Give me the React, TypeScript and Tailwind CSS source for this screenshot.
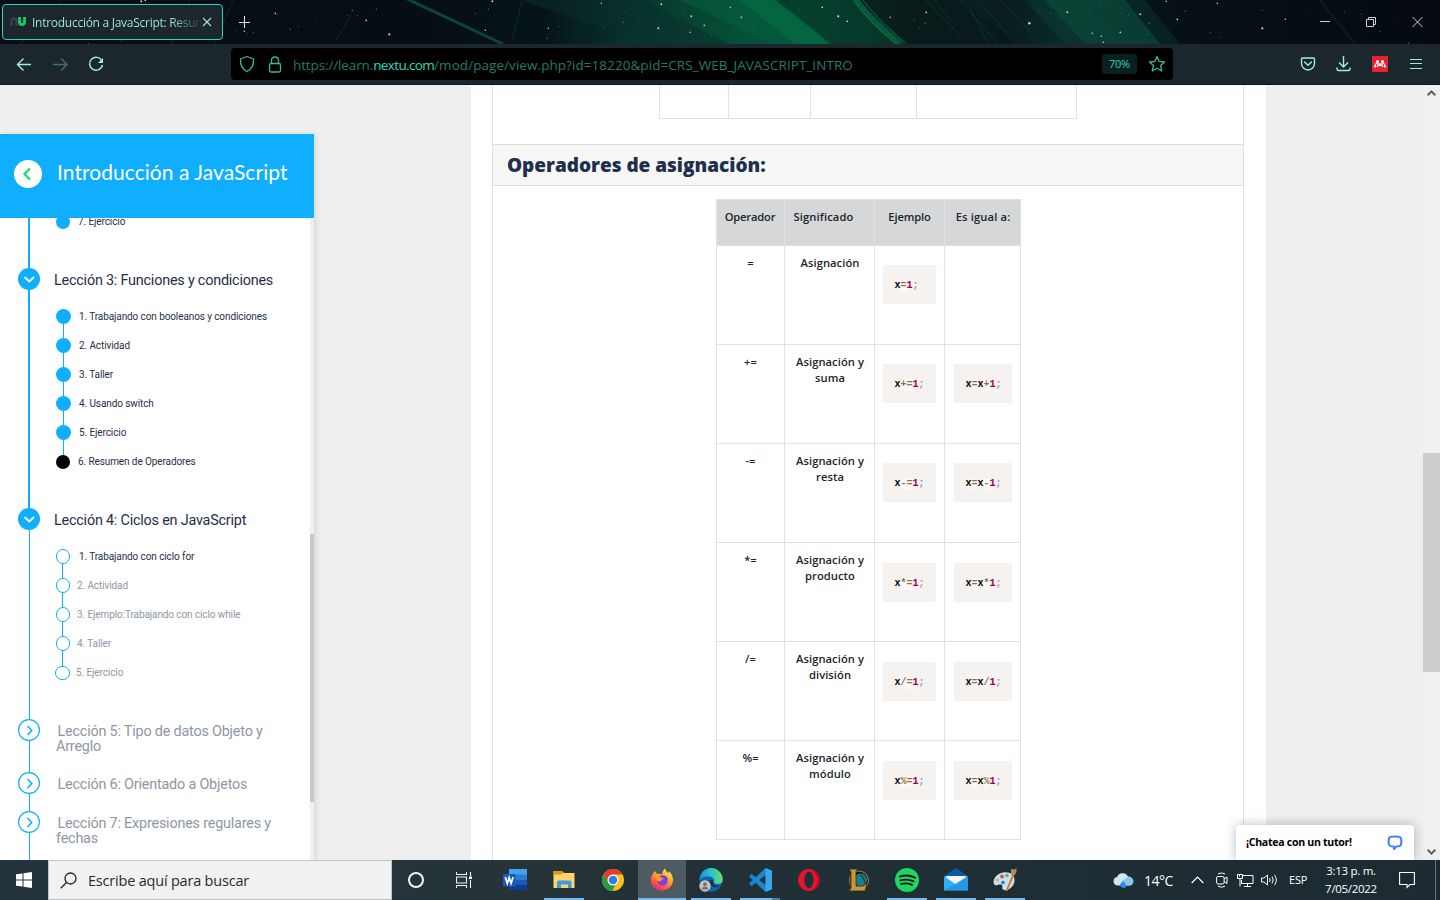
import React from "react";

type Token = { t: string; k: "x" | "op" | "n" | "p" };

const STARS: [number, number, number][] = [
  [141, 1, 1.2], [145, 0, 1], [275, 13, 1], [277, 14, 0.7], [290, 29, 0.8], [298, 26, 0.6], [307, 28, 0.5], [316, 16, 0.5], [347, 15, 0.6], [352, 10, 0.8], [357, 15, 0.6], [366, 20, 1], [376, 9, 0.8], [389, 34, 1.3], [475, 13, 0.7],
  [492, 1, 1.1], [488, 9, 0.8], [485, 30, 0.9], [504, 7, 0.5], [548, 28, 0.9], [547, 38, 0.8], [559, 26, 0.6], [601, 3, 0.9], [594, 5, 0.5], [603, 27, 0.6], [625, 12, 0.6], [623, 22, 0.8], [637, 20, 0.6], [661, 4, 1.1], [658, 28, 1.2], [683, 15, 0.6], [691, 16, 1.1], [690, 32, 0.9], [704, 25, 1], [711, 35, 0.6], [716, 17, 0.6], [730, 7, 0.9], [741, 17, 1], [752, 30, 0.7], [822, 7, 1], [838, 16, 1.3], [847, 21, 1], [890, 17, 0.9], [914, 20, 0.6], [926, 12, 1], [925, 23, 0.8], [919, 27, 0.6],
  [1029, 23, 1.5], [1038, 10, 0.5], [1050, 13, 0.6], [1067, 12, 1.1], [1059, 18, 0.6], [1092, 33, 0.9], [1101, 36, 0.9], [1103, 42, 0.9], [1100, 2, 0.6], [1106, 2, 0.6], [1121, 13, 0.7], [1128, 15, 0.6], [1140, 14, 1.1], [1149, 23, 0.8], [1120, 32, 1], [1147, 34, 0.6], [1166, 1, 0.9], [1177, 19, 1], [1185, 11, 0.8], [1217, 3, 0.9], [1202, 18, 0.5], [1210, 32, 0.7], [1219, 37, 0.6], [1224, 28, 0.5], [1233, 21, 0.5], [1262, 28, 1.3], [1262, 10, 0.7], [1285, 19, 0.9], [1307, 13, 0.5], [1344, 12, 0.6], [1361, 14, 0.7], [1380, 31, 0.7], [1397, 20, 0.5], [1408, 43, 0.8], [236, 30, 0.6], [244, 31, 0.9], [247, 33, 0.6], [253, 32, 0.7], [88, 43, 0.7], [121, 41, 0.7],
];

function Sky() {
  return (
    <svg className="absolute inset-0 h-full w-full" viewBox="0 0 1440 44" preserveAspectRatio="none" aria-hidden="true">
      <defs>
        <linearGradient id="sky" x1="0" x2="1">
          <stop offset="0" stopColor="#070d14" />
          <stop offset=".3" stopColor="#060e14" />
          <stop offset=".38" stopColor="#061519" />
          <stop offset=".44" stopColor="#07352c" />
          <stop offset=".52" stopColor="#055239" />
          <stop offset=".58" stopColor="#064a34" />
          <stop offset=".63" stopColor="#07251f" />
          <stop offset=".7" stopColor="#091c20" />
          <stop offset=".74" stopColor="#092b29" />
          <stop offset=".8" stopColor="#071118" />
          <stop offset="1" stopColor="#050a12" />
        </linearGradient>
      </defs>
      <path d="M0 0H1440V44H0z" fill="url(#sky)" />
      <path d="M520 0H640L730 44H650z" fill="#092e29" opacity=".5" />
      <path d="M680 0H770L830 44H770z" fill="#04603f" opacity=".5" />
      <path d="M740 0H780L829 44H795z" fill="#046c43" opacity=".7" />
      <path d="M775 0H850L905 44H832z" fill="#07372b" opacity=".7" />
      <path d="M855 0H960L1020 44H910z" fill="#08181a" opacity=".7" />
      <path d="M856 0Q872 22 900 44" fill="none" stroke="#07593a" strokeWidth="6" />
      <path d="M854 0Q869 22 896 44M863 0Q875 17 905 43" fill="none" stroke="#0a7048" strokeWidth="1" />
      <path d="M1025 0H1145L1180 44H1065z" fill="#0b4c3c" opacity=".3" />
      <path d="M1045 0H1125L1160 44H1085z" fill="#0b4c3c" opacity=".6" />
      <path d="M1080 0L1115 44M960 0L998 44M970 8L988 44M978 0L1016 44M1000 0L1042 44M790 0L828 44M800 0L832 44M780 14L808 44M925 0L960 35M935 0L950 20" stroke="#0b6a48" strokeWidth=".7" opacity=".45" />
      <path d="M405 -2L503 44" stroke="#0b4535" strokeWidth="3" />
      <path d="M233 0L215 44M352 14L336 40M62 0L20 44M190 0L170 44M522 2L512 40M180 30L172 44" stroke="#0c5a44" strokeWidth=".8" opacity=".5" />
      <path d="M1320 0L1355 44" stroke="#0a2a2c" strokeWidth="2" opacity=".6" />
      {STARS.map(([x, y, r], i) => (
        <circle key={i} cx={x + 0.3} cy={y + 0.3} r={r * 0.85} fill={r > 0.85 ? "#b9d8d2" : "#4d7473"} />
      ))}
    </svg>
  );
}

function BrowserChrome() {
  return (
    <header className="flex h-[85px] shrink-0 flex-col bg-[#07191a] font-['Open_Sans','Noto_Sans',sans-serif]">
      <div className="relative h-11 overflow-hidden">
        <Sky />
        <div className="relative flex h-full items-start">
          <div className="mt-1 ml-[2px] flex h-9 w-[221px] items-center rounded-[4px] border border-[#2fd3b9] bg-[#1c262d] pl-[7px]">
            <svg width="16" height="10" viewBox="0 0 16 10" className="shrink-0" aria-hidden="true">
              <path d="M1.5 9V4Q1.5 1.5 4 1.5T6.5 4V9" fill="none" stroke="#35404f" strokeWidth="2.4" />
              <path d="M9.5 0V5Q9.5 7.6 12 7.6T14.5 5V0" fill="none" stroke="#15cf62" strokeWidth="2.8" />
            </svg>
            <span className="ml-[6px] w-[169px] overflow-hidden whitespace-nowrap bg-gradient-to-r from-[#a6f0e3] from-82% to-[#1c262d] to-102% bg-clip-text pt-px text-[12px] leading-5 tracking-[-0.27px] text-transparent">
              Introducción a JavaScript: Resumen
            </span>
            <svg width="10" height="10" viewBox="0 0 10 10" className="ml-[1px]" aria-hidden="true">
              <path d="M1 1L9 9M9 1L1 9" stroke="#a6e8dd" strokeWidth="1.1" />
            </svg>
          </div>
          <svg width="12" height="12" viewBox="0 0 12 12" className="mt-[16px] ml-4" aria-hidden="true">
            <path d="M5.500 0V12M0 6.500H11" stroke="#c5eee6" strokeWidth="1.1" />
          </svg>
          <div className="mt-[16px] mr-[17px] ml-auto flex items-center gap-[35px]">
            <svg width="11" height="12" viewBox="0 0 11 12" aria-hidden="true"><path d="M0 5.500H10" stroke="#c3d4d2" /></svg>
            <svg width="11" height="12" viewBox="0 0 11 12" fill="none" stroke="#c3d4d2" aria-hidden="true"><path d="M.5 3.500h7v7h-7zM2.500 3V1.500h7v7H8" /></svg>
            <svg width="11" height="12" viewBox="0 0 11 12" stroke="#c3d4d2" aria-hidden="true"><path d="M.5 1L10.500 11M10.500 1L.5 11" /></svg>
          </div>
        </div>
      </div>
      <div className="flex h-10 items-center bg-[#1c262d]">
        <svg width="104" height="20" viewBox="0 0 104 20" fill="none" className="ml-4 shrink-0" aria-hidden="true">
          <path d="M15 10.500H1.500M7.500 4.500L1.500 10.500L7.500 16.500" stroke="#9af0e0" strokeWidth="1.400" />
          <path d="M37 10.500H50.500M45 4.500L51 10.500L45 16.500" stroke="#3d716f" strokeWidth="1.400" />
          <path d="M86 7A6.500 6.500 0 1 0 86.500 11" stroke="#9af0e0" strokeWidth="1.500" />
          <path d="M87 4V9H82z" fill="#9af0e0" />
        </svg>
        <div className="ml-[111px] flex h-8 w-[942px] shrink-0 items-center rounded-[4px] bg-black pr-[7px] pl-2">
          <svg width="16" height="18" viewBox="0 0 16 18" fill="none" stroke="#36b9a2" strokeWidth="1.300" aria-hidden="true">
            <path d="M8 1.500L14.500 4C14.800 10 12.500 14.500 8 16.500C3.500 14.500 1.200 10 1.500 4z" strokeLinejoin="round" />
          </svg>
          <svg width="14" height="17" viewBox="0 0 14 17" fill="none" stroke="#36b9a2" strokeWidth="1.300" className="ml-[13px]" aria-hidden="true">
            <rect x="1.500" y="7.500" width="11" height="8.500" rx="1.500" />
            <path d="M3.500 7.500V4.500Q3.500 1 7 1T10.500 4.500V7.500" />
          </svg>
          <span className="ml-[11px] pt-px whitespace-nowrap text-[13.500px] leading-5 text-[#26796c]">
            <span className="tracking-[-0.120px]">https://learn.</span><span className="tracking-[-0.640px] text-[#30d9bd]">nextu.com</span><span className="tracking-[0.060px]">/mod/page/view.php?id=18220&amp;pid=CRS_WEB_JAVASCRIPT_INTRO</span>
          </span>
          <span className="ml-auto flex h-5 w-[35px] items-center justify-center rounded-[3px] bg-[#09201f] pt-px text-[11px] tracking-[-0.300px] text-[#31d0b5]">70%</span>
          <svg width="18" height="18" viewBox="0 0 18 18" fill="none" stroke="#36b9a2" strokeWidth="1.300" strokeLinejoin="round" className="ml-[11px]" aria-hidden="true">
            <path d="M9 1.500L11.200 6.400L16.500 7L12.600 10.600L13.700 16L9 13.300L4.300 16L5.400 10.600L1.500 7L6.800 6.400z" />
          </svg>
        </div>
        <div className="mr-[17px] ml-auto flex items-center">
          <svg width="16" height="16" viewBox="0 0 16 16" fill="none" stroke="#9af0e0" strokeWidth="1.400" aria-hidden="true">
            <path d="M2.500 2H13.500Q14.500 2 14.500 3V7.500A6.500 6.500 0 0 1 1.500 7.500V3Q1.500 2 2.500 2z" />
            <path d="M4.500 6L8 9.300L11.500 6" strokeLinecap="round" />
          </svg>
          <svg width="16" height="18" viewBox="0 0 16 18" fill="none" stroke="#9af0e0" strokeWidth="1.400" className="ml-5" aria-hidden="true">
            <path d="M7.500 1V12M3 7.500L7.500 12L12 7.500M1 12.500V14Q1 15.500 2.500 15.500H12.500Q14 15.500 14 14V12.500" />
          </svg>
          <svg width="16" height="16" viewBox="0 0 16 16" className="ml-5" aria-hidden="true">
            <path d="M0 0H16V16H0z" fill="#e8202f" />
            <circle cx="5.500" cy="5.500" r="1.500" fill="#fff" />
            <circle cx="10.500" cy="5.500" r="1.500" fill="#fff" />
            <circle cx="8" cy="8.600" r="1.600" fill="#fff" />
            <path d="M3.200 10.500Q3 8 5 6.800M12.800 10.500Q13 8 11 6.800M5.500 5.500L6 9.500L5.800 11M10.500 5.500L10 9.500L10.200 11" fill="none" stroke="#fff" strokeWidth="1.100" />
            <circle cx="3.200" cy="10.300" r="1.200" fill="#fff" />
            <circle cx="12.800" cy="10.300" r="1.200" fill="#fff" />
          </svg>
          <svg width="13" height="12" viewBox="0 0 13 12" stroke="#9af0e0" strokeWidth="1.100" className="ml-[22px]" aria-hidden="true">
            <path d="M0 1.500H12M0 5.500H12M0 10.500H12" />
          </svg>
        </div>
      </div>
    </header>
  );
}

function LessonCircle({ open }: { open?: boolean }) {
  return open ? (
    <svg width="22" height="22" viewBox="0 0 22 22" className="ml-[18px] shrink-0" aria-hidden="true">
      <circle cx="11" cy="11" r="11" fill="#0faeff" />
      <path d="M6.500 9L11.300 13.500L16 9" fill="none" stroke="#fff" strokeWidth="1.800" />
    </svg>
  ) : (
    <svg width="22" height="22" viewBox="0 0 22 22" className="ml-[18px] shrink-0" aria-hidden="true">
      <circle cx="11" cy="11" r="10.400" fill="#fff" stroke="#0faeff" strokeWidth="1.200" />
      <path d="M9.500 7L13.700 11.500L9.500 16" fill="none" stroke="#0faeff" strokeWidth="1.600" />
    </svg>
  );
}

function Lesson({ open, title }: { open?: boolean; title: string[] }) {
  return (
    <div className="flex h-[22px] items-start">
      <LessonCircle open={open} />
      {open ? (
        <span className="mt-px ml-[14px] whitespace-nowrap text-[14.400px] leading-6 tracking-[-0.210px] text-[#1f2f46]">{title[0]}</span>
      ) : (
        <div className="mt-[6px] ml-[16px] flex flex-col text-[14.400px] leading-[14.500px] tracking-[-0.200px] text-[#8d97a3]">
          <span className="ml-[1.500px] whitespace-nowrap">{title[0]}</span>
          {title[1] && <span>{title[1]}</span>}
        </div>
      )}
    </div>
  );
}

function Item({ label, kind, muted, indent }: { label: string; kind: "done" | "now" | "todo"; muted?: boolean; indent: "a" | "b" | "c" | "d" }) {
  const dot =
    kind === "done"
      ? indent === "b"
        ? "h-[14px] w-[14px] bg-[#0faeff]"
        : "h-[15px] w-[15px] bg-[#0faeff]"
      : kind === "now"
        ? "h-[14px] w-[14px] bg-black"
        : indent === "d"
          ? "h-[14px] w-[15px] border border-[#0faeff] bg-white"
          : "h-[15px] w-[14px] border border-[#0faeff] bg-white";
  const gap = { a: "pl-[79px]", b: "pl-[78px]", c: "pl-[77px]", d: "pl-[76px]" }[indent];
  return (
    <li className="grid h-[29px] items-center">
      <i className={`col-start-1 row-start-1 ${indent === "d" ? "ml-[55px]" : "ml-[56px]"} rounded-full ${dot}`} />
      <span className={`col-start-1 row-start-1 whitespace-nowrap text-[10px] leading-4 tracking-[-0.100px] ${gap} ${muted ? "text-[#8d97a3]" : "text-[#1f2f46]"}`}>{label}</span>
    </li>
  );
}

function Sidebar() {
  return (
    <aside className="mt-[49px] flex h-[726px] w-[314px] shrink-0 flex-col bg-white font-[Roboto,sans-serif] shadow-[2px_0_5px_rgba(0,0,0,0.10)]">
      <div className="flex h-[84px] shrink-0 items-center bg-[#0faeff] pb-1">
        <svg width="28" height="28" viewBox="0 0 28 28" className="ml-[14px]" aria-hidden="true">
          <circle cx="14" cy="14" r="14" fill="#fff" />
          <path d="M16 8.500L10.500 14L16 19.500" fill="none" stroke="#1bd773" strokeWidth="2.200" />
        </svg>
        <h1 className="ml-[15px] pb-[4px] font-[Lato,sans-serif] text-[21px] leading-8 tracking-[0.050px] whitespace-nowrap text-white">Introducción a JavaScript</h1>
      </div>
      <div className="flex h-[642px] overflow-hidden">
        <div className="grid h-[642px] w-[310px] overflow-hidden">
          <div className="col-start-1 row-start-1 ml-[28px] flex h-[642px] flex-col">
            <i className="h-[301px] w-[2px] bg-[#0faeff]" />
            <i className="ml-px h-[341px] w-px bg-[#0faeff]" />
          </div>
          <div className="col-start-1 row-start-1 flex h-[642px] flex-col">
            <ul className="-mt-[11px] h-[29px] shrink-0">
              <Item label="7. Ejercicio" kind="done" indent="b" />
            </ul>
            <div className="mt-[32px]"><Lesson open title={["Lección 3: Funciones y condiciones"]} /></div>
            <div className="mt-[12px] grid">
              <i className="col-start-1 row-start-1 mt-[14px] ml-[63px] h-[145px] w-px bg-[#0faeff]" />
              <ul className="col-start-1 row-start-1">
                <Item label="1. Trabajando con booleanos y condiciones" kind="done" indent="a" />
                <Item label="2. Actividad" kind="done" indent="a" />
                <Item label="3. Taller" kind="done" indent="a" />
                <Item label="4. Usando switch" kind="done" indent="a" />
                <Item label="5. Ejercicio" kind="done" indent="a" />
                <Item label="6. Resumen de Operadores" kind="now" indent="b" />
              </ul>
            </div>
            <div className="mt-[32px]"><Lesson open title={["Lección 4: Ciclos en JavaScript"]} /></div>
            <div className="mt-[12px] grid">
              <i className="col-start-1 row-start-1 mt-[14px] ml-[62px] h-[116px] w-px bg-[#0faeff]" />
              <ul className="col-start-1 row-start-1">
                <Item label="1. Trabajando con ciclo for" kind="todo" indent="a" />
                <Item label="2. Actividad" kind="todo" muted indent="c" />
                <Item label="3. Ejemplo:Trabajando con ciclo while" kind="todo" muted indent="c" />
                <Item label="4. Taller" kind="todo" muted indent="c" />
                <Item label="5. Ejercicio" kind="todo" muted indent="d" />
              </ul>
            </div>
            <div className="mt-[32px]"><Lesson title={["Lección 5: Tipo de datos Objeto y", "Arreglo"]} /></div>
            <div className="mt-[31px]"><Lesson title={["Lección 6: Orientado a Objetos"]} /></div>
            <div className="mt-[17px]"><Lesson title={["Lección 7: Expresiones regulares y", "fechas"]} /></div>
          </div>
        </div>
        <div className="w-1 bg-[#efefef] pt-[316px]"><div className="h-[268px] bg-[#c9c9c9]" /></div>
      </div>
    </aside>
  );
}

function tokens(code: string): Token[] {
  return (code.match(/x|1|;|[^x1;]+/g) ?? []).map((t) => ({ t, k: t === "x" ? "x" : t === "1" ? "n" : t === ";" ? "p" : "op" }));
}

const TOKEN_STYLE = {
  x: "font-bold text-black",
  n: "font-bold text-[#990055]",
  p: "text-[#999999]",
  op: "bg-white/50 text-[#9a6e3a]",
};

function Code({ code }: { code: string }) {
  return (
    <pre className="flex h-[39px] items-center bg-[#f5f2f0] pt-[2px] pl-3 font-['Liberation_Mono',monospace] text-[10px] leading-3">
      {tokens(code).map((p, i) => (
        <span key={i} className={TOKEN_STYLE[p.k]}>{p.t}</span>
      ))}
    </pre>
  );
}

const ROWS: [string, string, string, string][] = [
  ["=", "Asignación", "x=1;", ""],
  ["+=", "Asignación y suma", "x+=1;", "x=x+1;"],
  ["-=", "Asignación y resta", "x-=1;", "x=x-1;"],
  ["*=", "Asignación y producto", "x*=1;", "x=x*1;"],
  ["/=", "Asignación y división", "x/=1;", "x=x/1;"],
  ["%=", "Asignación y módulo", "x%=1;", "x=x%1;"],
];

function Content() {
  return (
    <main className="ml-[157px] w-[795px] shrink-0 bg-white pl-[21px]">
      <div className="flex h-[775px] w-[752px] flex-col items-center border-x border-[#dfe1e4]">
        <div className="grid h-[34px] w-[418px] shrink-0 grid-cols-[69px_82px_106px_160px] border-b border-l border-[#dee2e6]">
          <i className="border-r border-[#dee2e6]" />
          <i className="border-r border-[#dee2e6]" />
          <i className="border-r border-[#dee2e6]" />
          <i className="border-r border-[#dee2e6]" />
        </div>
        <h2 className="mt-[25px] flex h-[42px] w-full shrink-0 items-center border-y border-[#dadcde] bg-[#f7f7f7] pl-[14px] font-['Open_Sans',sans-serif] text-[19px] font-extrabold tracking-[-0.020px] whitespace-nowrap text-[#20304c]">
          Operadores de asignación:
        </h2>
        <div className="mt-[13px] w-[305px] shrink-0 border-t border-l border-[#dee2e6] font-['Open_Sans',sans-serif] text-[11.200px] leading-4 font-semibold text-[#212529]">
          <div className="grid h-[46px] grid-cols-[68px_90px_70px_76px] bg-[#d5d7d9] text-center whitespace-nowrap">
            <div className="border-r border-b border-[#dee2e6] pt-[9px] tracking-[-0.180px]">Operador</div>
            <div className="border-r border-b border-[#dee2e6] pt-[9px] pr-[11px] tracking-[0.120px]">Significado</div>
            <div className="border-r border-b border-[#dee2e6] pt-[9px] pl-px tracking-[-0.150px]">Ejemplo</div>
            <div className="border-r border-b border-[#dee2e6] pt-[9px] pl-[2px] tracking-[0.150px]">Es igual a:</div>
          </div>
          {ROWS.map(([op, name, a, b], i) => (
            <div key={op} className="grid h-[99px] grid-cols-[68px_90px_70px_76px] text-center">
              <div className="border-r border-b border-[#dee2e6] pt-[9px] pl-px">{op}</div>
              <div className="border-r border-b border-[#dee2e6] pt-[9px] pr-[7px] pl-[9px] leading-[16.300px] tracking-[0.050px]">{name}</div>
              <div className={`border-r border-b border-[#dee2e6] px-[8px] ${i > 2 ? "pt-[20px]" : "pt-[19px]"}`}><Code code={a} /></div>
              <div className={`border-r border-b border-[#dee2e6] pr-[8px] pl-[9px] ${i > 2 ? "pt-[20px]" : "pt-[19px]"}`}>{b && <Code code={b} />}</div>
            </div>
          ))}
        </div>
      </div>
    </main>
  );
}

function Arrow({ down }: { down?: boolean }) {
  return (
    <svg width="9" height="6" viewBox="0 0 9 6" aria-hidden="true">
      <path d={down ? "M.7 .8L4.500 4.600L8.300 .8" : "M.7 5.200L4.500 1.400L8.300 5.200"} fill="none" stroke="#5d5d5d" strokeWidth="2" />
    </svg>
  );
}

const svg = (size: number, body: React.ReactNode) => (
  <svg width={size} height={size} viewBox="0 0 24 24" aria-hidden="true">{body}</svg>
);

const APPS: { name: string; line: "none" | "short" | "full" | "split"; icon: React.ReactNode }[] = [
  { name: "word", line: "none", icon: svg(24, <><path d="M6 1H24V7H6z" fill="#41a5ee" /><path d="M6 6.500H24V12H6z" fill="#2b7cd3" /><path d="M6 12H24V17.500H6z" fill="#185abd" /><path d="M6 17H24V22H6z" fill="#103f91" /><rect y="6" width="12.500" height="12.500" rx="1" fill="#185abd" /><path d="M2.300 9L4.300 15.500L6.200 9.500L8.100 15.500L10.100 9" fill="none" stroke="#fff" strokeWidth="1.700" /></>) },
  { name: "explorer", line: "short", icon: svg(24, <><path d="M1.500 3H10L12 5H22.500V20H1.500z" fill="#ffd567" /><path d="M1.500 3H10L11 5L9.500 6.500H1.500z" fill="#d99a14" /><path d="M5 20V14Q5 12.500 6.500 12.500H18Q19.500 12.500 19.500 14V20H16V16.500H9V20z" fill="#3a9be0" /></>) },
  { name: "chrome", line: "none", icon: svg(24, <><circle cx="12" cy="12" r="11" fill="#fbc116" /><path d="M2.500 6.500A11 11 0 0 1 21.500 6.500H12L7.300 9.300L7.300 14.800z" fill="#e33b2e" /><path d="M2.500 6.500L7.300 14.800Q9.500 18 14.500 16.500L11.500 23A11 11 0 0 1 2.500 6.500z" fill="#229a48" /><circle cx="12" cy="12" r="5.500" fill="#fff" /><circle cx="12" cy="12" r="4.300" fill="#2f7de9" /></>) },
  { name: "firefox", line: "full", icon: svg(24, <><defs><linearGradient id="ff" x1=".8" y1="0" x2=".2" y2="1"><stop offset="0" stopColor="#fff05a" /><stop offset=".45" stopColor="#ff9a2a" /><stop offset=".8" stopColor="#ff3d55" /><stop offset="1" stopColor="#e62a77" /></linearGradient></defs><path d="M3 5.500L5 3L7 6Q10 5.500 12 6.500Q12 3 15 .5Q16 3.500 18 5L19.500 3.500Q23.500 8 23 13.500A11.300 11 0 0 1 .7 13.500Q.7 8 3 5.500z" fill="url(#ff)" /><circle cx="12.500" cy="12.500" r="5.200" fill="#8040e0" /><path d="M4 8.500Q8 6.500 11 9.500L14 10.500Q11 11.500 10.500 13.500Q7 14 4 8.500z" fill="#ff9b2b" /><path d="M12.500 7.300Q17.800 8 17.700 12.500Q16 9 12.500 7.300z" fill="#5a39c8" /></>) },
  { name: "edge", line: "short", icon: svg(24, <><defs><linearGradient id="eg" x1="0" x2="1"><stop offset="0" stopColor="#1790dc" /><stop offset=".5" stopColor="#2bc3d2" /><stop offset="1" stopColor="#65e15a" /></linearGradient></defs><circle cx="12" cy="12" r="11.500" fill="#0f64b5" /><path d="M.5 12A11.500 11.500 0 0 1 23.700 11Q24 16 18.500 16Q14.500 16 15 13.500Q15.500 9.500 11 8.500Q5 7.500 .5 12z" fill="url(#eg)" /><path d="M14 12Q13 17 18 18Q21 18 23 16.500Q19 20 14.500 19Q9.500 17.500 10.500 12.500z" fill="#203039" /><circle cx="6" cy="18" r="5.700" fill="#c7c5c2" /><circle cx="6" cy="16.300" r="2" fill="#77726e" /><path d="M2.700 21.500Q3 18.500 6 18.500T9.300 21.500z" fill="#77726e" /></>) },
  { name: "code", line: "split", icon: svg(24, <><path d="M17.500 0L24 2.800V21.200L17.500 24L1 8.500L3.500 6L17.500 17V7L3.500 18L1 15.500z" fill="#1689d2" /><path d="M17.500 0L24 2.800V21.200L17.500 24z" fill="#35a8ef" /></>) },
  { name: "opera", line: "none", icon: svg(24, <><ellipse cx="12" cy="12" rx="11" ry="11" fill="#e3152c" /><path d="M15 1.500A11 11 0 0 1 15 22.500Q21 18 21 12T15 1.500z" fill="#a70e1e" /><ellipse cx="12" cy="12" rx="4.600" ry="8.300" fill="#232f36" /></>) },
  { name: "league", line: "none", icon: svg(24, <><circle cx="13" cy="12.500" r="9.500" fill="#0b1d24" stroke="#a67c35" strokeWidth="1.100" /><circle cx="14.500" cy="12" r="6.500" fill="#1c7f8c" /><path d="M14 7Q18 9 19 15" fill="none" stroke="#0d4c59" strokeWidth="1.500" /><path d="M3 1H11.500L10 3.500V18H17L21 15.500L19 23H3L5 20V4z" fill="#c8973d" stroke="#38270f" strokeWidth=".8" /></>) },
  { name: "spotify", line: "short", icon: svg(24, <><circle cx="12" cy="12" r="12" fill="#1ed760" /><path d="M5 8.500Q12.500 6 20 9.700M5.500 12.400Q12.500 10.500 18.500 13.300M6 16Q12 14.500 17 16.800" fill="none" stroke="#121a18" strokeWidth="1.900" strokeLinecap="round" /></>) },
  { name: "mail", line: "short", icon: svg(24, <><path d="M0 8L12 0L24 8V12H0z" fill="#0c59a8" /><path d="M2 8H22V17H2z" fill="#f4f7fb" /><path d="M0 8L12 16.500L24 8V22.500H0z" fill="#32b1f4" /><path d="M24 8L0 22.500H24z" fill="#178be0" opacity=".6" /></>) },
  { name: "paint", line: "short", icon: svg(24, <><path d="M10 4.500C17 3 22 7 21.500 13C21 19 15 23 11 22C7.500 21 11 17.500 8 16.500C5 16 2 19 .7 15.500C-.3 11 4 5.500 10 4.500z" fill="#c6e1f0" /><circle cx="9" cy="8.500" r="1.900" fill="#e94b3b" /><circle cx="14" cy="7.500" r="1.700" fill="#61b653" /><circle cx="4.500" cy="12" r="1.800" fill="#e5b93f" /><circle cx="10" cy="14.500" r="1.800" fill="#3b70bd" /><path d="M12.500 23L19 7L21 8L14.500 23z" fill="#d77d2b" /><path d="M18 1Q21 2 23.500 .5Q24 5 20.500 8L18 7z" fill="#b88962" /></>) },
];

function Taskbar() {
  return (
    <footer className="flex h-10 shrink-0 bg-[linear-gradient(90deg,#23333b,#26343a_35%,#202e35_60%,#1d2a31)] font-['Open_Sans','Noto_Sans',sans-serif] text-white">
      <div className="flex w-12 items-center justify-center">
        <svg width="16" height="16" viewBox="0 0 16 16" fill="#fff" aria-hidden="true"><path d="M0 2.300L6.500 1.400V7.500H0zM7.500 1.200L16 0V7.500H7.500zM0 8.500H6.500V14.600L0 13.700zM7.500 8.500H16V16L7.500 14.800z" /></svg>
      </div>
      <div className="flex w-[344px] items-center border border-[#c2c5c6] bg-[#f1f1f1] pl-[11px]">
        <svg width="17" height="17" viewBox="0 0 17 17" fill="none" stroke="#222" strokeWidth="1.300" aria-hidden="true"><circle cx="10.500" cy="6.500" r="5.500" /><path d="M6.500 10.500L.7 16.300" /></svg>
        <span className="ml-[11px] pt-px text-[14.500px] tracking-[-0.200px] whitespace-nowrap text-[#2c2c2c]">Escribe aquí para buscar</span>
      </div>
      <div className="flex w-12 items-center justify-center">
        <svg width="18" height="18" viewBox="0 0 18 18" aria-hidden="true"><circle cx="9" cy="9" r="7" fill="none" stroke="#f2f2f2" strokeWidth="2" /></svg>
      </div>
      <div className="flex w-12 items-center justify-center">
        <svg width="16" height="16" viewBox="0 0 16 16" fill="none" stroke="#f0f0f0" strokeWidth="1.100" aria-hidden="true"><path d="M.5 0V2.500H10.500V0M.5 5H10.500V11H.5zM.5 16V13.500H10.500V16M14.500 0V4M14.500 8V16" /><path d="M13 4.500H16V7H13z" fill="#fff" stroke="none" /></svg>
      </div>
      <nav className="ml-[3px] flex gap-px">
        {APPS.map((a) => (
          <div key={a.name} className={`flex w-12 flex-col items-center ${a.line === "full" ? "bg-[#4d5b63]" : ""}`}>
            <div className="flex h-[38px] items-center pt-[2px]">{a.icon}</div>
            {a.line === "short" && <i className="h-[2px] w-10 bg-[#76b9ed]" />}
            {a.line === "full" && <i className="h-[2px] w-12 bg-[#76b9ed]" />}
            {a.line === "split" && <div className="flex h-[2px] w-10"><i className="h-[2px] w-8 bg-[#76b9ed]" /><i className="h-[2px] w-2 bg-[#547f9f]" /></div>}
          </div>
        ))}
      </nav>
      <div className="ml-auto flex items-center">
        <svg width="21" height="17" viewBox="0 0 21 17" aria-hidden="true">
          <path d="M4.500 13.500A4.300 4.300 0 0 1 4 5A6 6 0 0 1 15 4.500A4.600 4.600 0 0 1 16.500 13.500z" fill="#cfe6f9" />
          <path d="M7 13.500Q8 8 15 5Q20 5 20.500 9.500Q20 13.500 16.500 13.500z" fill="#8dc3ef" />
          <path d="M10.500 9Q14 13 12.800 15T8.300 15T10.500 9z" fill="#2d8ce6" />
        </svg>
        <span className="ml-[10px] w-[32px] pt-px text-[14px] tracking-[-0.500px]">14°C</span>
        <svg width="13" height="8" viewBox="0 0 13 8" className="ml-[15px]" aria-hidden="true"><path d="M.7 7L6.500 1.200L12.300 7" fill="none" stroke="#fff" strokeWidth="1.200" /></svg>
        <svg width="12" height="16" viewBox="0 0 12 16" fill="none" stroke="#fff" className="ml-[12px]" aria-hidden="true"><rect x=".6" y="4.500" width="7.500" height="7.500" rx="1.500" /><path d="M8 7L11 5V11.500L8 9.500M2 2Q5.500-.2 9 2M2 14.200Q5.500 16.300 9 14.200" /></svg>
        <svg width="17" height="15" viewBox="0 0 17 15" fill="none" stroke="#fff" className="ml-[9px]" aria-hidden="true"><path d="M6 2.500H16V10.500H4.500V7M10.500 10.500V13.500M7 13.500H14M.5 1.500H5.500V5.500H.5zM2.500 1.500V3.500M3 5.500V13.500" /></svg>
        <svg width="17" height="14" viewBox="0 0 17 14" fill="none" stroke="#fff" className="ml-[7px]" aria-hidden="true"><path d="M.5 5H3L6.500 2V12L3 9H.5zM8.500 5Q10 7 8.500 9M11 3.500Q13.500 7 11 10.500M13.500 1.800Q17.200 7 13.500 12.200" /></svg>
        <span className="ml-[11px] w-[20px] text-[11px] tracking-[-0.200px]">ESP</span>
        <div className="mr-px ml-[12px] w-[60px] pb-px text-center text-[11.500px] leading-[17.500px] tracking-[-0.300px] whitespace-nowrap">
          <div>3:13 p. m.</div>
          <div>7/05/2022</div>
        </div>
        <svg width="16" height="18" viewBox="0 0 16 18" fill="none" stroke="#fff" strokeWidth="1.100" className="ml-[17px]" aria-hidden="true"><path d="M.6 1.500H15.400V13.500H11L8 16.500V13.500H.6z" /></svg>
        <i className="mr-1 ml-[20px] h-10 w-px bg-[#62737c]" />
      </div>
    </footer>
  );
}

export default function App() {
  return (
    <div className="flex h-[900px] w-[1440px] flex-col overflow-hidden bg-[#efefef]">
      <BrowserChrome />
      <div className="relative flex h-[775px] shrink-0 overflow-hidden">
        <Sidebar />
        <Content />
        <div className="ml-auto flex w-[17px] flex-col items-center bg-[#f0f0f0]">
          <div className="flex h-[17px] items-center pb-[2px]"><Arrow /></div>
          <div className="mt-[351px] h-[219px] w-full bg-[#cdcdcd]" />
          <div className="mt-auto flex h-[17px] items-center"><Arrow down /></div>
        </div>
        <div className="absolute right-[26px] bottom-0 flex h-[35px] w-[178px] items-center rounded-t-[4px] bg-white pr-[11px] pl-[10px] shadow-[0_0_12px_rgba(0,0,0,0.28)]">
          <span className="font-['Open_Sans',sans-serif] text-[10.600px] font-bold tracking-[-0.300px] whitespace-nowrap text-black">¡Chatea con un tutor!</span>
          <svg width="16" height="16" viewBox="0 0 16 16" fill="none" stroke="#4384f5" strokeWidth="2.100" strokeLinejoin="round" className="ml-auto" aria-hidden="true"><path d="M4 1.700Q8 1.200 12 1.700Q14 2 14.200 4Q14.500 6.500 14.200 9Q14 11 12 11.300H10L7 14V11.500L4 11.300Q2 11 1.800 9Q1.500 6.500 1.800 4Q2 2 4 1.700z" /></svg>
        </div>
      </div>
      <Taskbar />
    </div>
  );
}
